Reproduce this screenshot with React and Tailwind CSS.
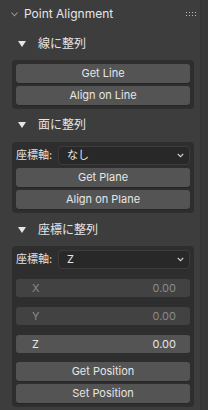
import React from "react";

const font = { fontFamily: '"Inter", "DejaVu Sans", "Noto Sans CJK JP", sans-serif' };

function Btn({ children }) {
  return (
    <div className="h-[19px] rounded-[3px] bg-[#545454] flex items-center justify-center text-[11px] text-[#e6e6e6] shadow-[0_1px_0_#262626]">
      {children}
    </div>
  );
}

function Sub({ children }) {
  return (
    <div className="h-[24px] flex items-center pl-[18px]">
      <svg width="8" height="6" viewBox="0 0 8 6" className="mr-[12px]">
        <path d="M0 0 L8 0 L4 6 Z" fill="#e6e6e6" />
      </svg>
      <span className="text-[12px] text-[#e6e6e6]">{children}</span>
    </div>
  );
}

function Chev() {
  return (
    <svg width="7" height="5" viewBox="0 0 7 5">
      <path d="M0.8 1 L3.5 3.7 L6.2 1" fill="none" stroke="#d0d0d0" strokeWidth="1.1" />
    </svg>
  );
}

function Drop({ value }) {
  return (
    <div className="flex items-center h-[19px]">
      <span className="w-[42px] text-[11px] text-[#e0e0e0]">座標軸:</span>
      <div className="flex-1 h-[19px] rounded-[4px] bg-[#282828] border border-[#3c3c3c] flex items-center justify-between pl-[8px] pr-[5px]">
        <span className="text-[11px] text-[#e6e6e6]">{value}</span>
        <Chev />
      </div>
    </div>
  );
}

function Field({ label, disabled }) {
  return (
    <div
      className={
        disabled
          ? "h-[18px] rounded-[3px] bg-[#424242] flex items-center justify-between pl-[16px] pr-[14px] text-[11px] text-[#8a8a8a]"
          : "h-[18px] rounded-[3px] bg-[#545454] flex items-center justify-between pl-[16px] pr-[14px] text-[11px] text-[#e6e6e6]"
      }
    >
      <span>{label}</span>
      <span>0.00</span>
    </div>
  );
}

export default function App() {
  return (
    <div className="w-[208px] h-[410px] bg-[#3d3d3d] flex overflow-hidden" style={font}>
      <div className="w-[200px] flex flex-col">
        <div className="h-[28px] flex items-center pl-[11px] pr-[4px]">
          <svg width="7" height="5" viewBox="0 0 7 5" className="mr-[6px]">
            <path d="M0.5 0.5 L3.5 3.8 L6.5 0.5" fill="none" stroke="#9a9a9a" strokeWidth="1.1" />
          </svg>
          <span className="text-[12px] text-[#e6e6e6] flex-1">Point Alignment</span>
          <div className="grid grid-cols-4 gap-x-[2px] gap-y-[2px]">
            {Array.from({ length: 8 }).map((_, i) => (
              <div key={i} className="w-[1px] h-[1px] bg-[#bdbdbd]" />
            ))}
          </div>
        </div>

        <div className="mt-[4px]">
          <Sub>線に整列</Sub>
        </div>
        <div className="mx-[12px] mt-[4px] rounded-[4px] bg-[#2e2e2e] p-[4px] flex flex-col gap-[3px] w-[182px]">
          <Btn>Get Line</Btn>
          <Btn>Align on Line</Btn>
        </div>

        <div className="mt-[4px]">
          <Sub>面に整列</Sub>
        </div>
        <div className="mx-[12px] mt-[5px] rounded-[4px] bg-[#2e2e2e] p-[4px] flex flex-col gap-[3px] w-[182px]">
          <Drop value="なし" />
          <Btn>Get Plane</Btn>
          <Btn>Align on Plane</Btn>
        </div>

        <div className="mt-[5px]">
          <Sub>座標に整列</Sub>
        </div>
        <div className="mx-[12px] mt-[4px] rounded-[4px] bg-[#2e2e2e] p-[4px] flex flex-col w-[182px]">
          <Drop value="Z" />
          <div className="mt-[10px] flex flex-col gap-[10px]">
            <Field label="X" disabled />
            <Field label="Y" disabled />
            <Field label="Z" />
          </div>
          <div className="mt-[9px] flex flex-col gap-[3px]">
            <Btn>Get Position</Btn>
            <Btn>Set Position</Btn>
          </div>
        </div>
      </div>
      <div className="w-[8px] h-full bg-[#393939] border-l border-[#343434]" />
    </div>
  );
}
